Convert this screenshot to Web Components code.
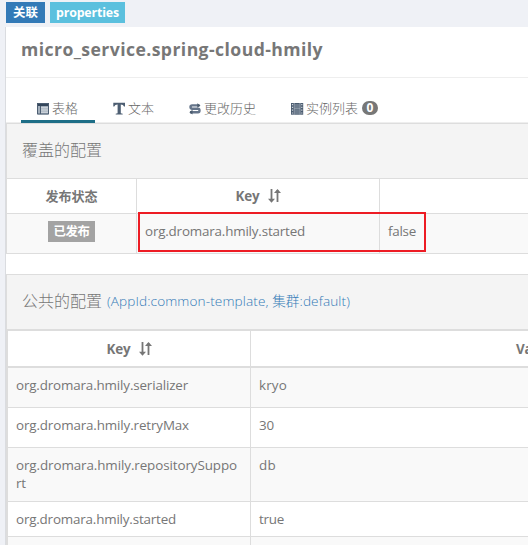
<!DOCTYPE html>
<html lang="zh">
<head>
<meta charset="utf-8">
<title>micro_service.spring-cloud-hmily</title>
<style>
html,body{margin:0;height:545px;overflow:hidden;background:#eff1f6}
body{font:13.4px/18px "Open Sans","Noto Sans","Noto Sans CJK SC",sans-serif;color:#767676}
</style>
</head>
<body>
<config-page></config-page>
<script>
const define = (name, html, after) => {
  const t = document.createElement('template');
  t.innerHTML = html;
  customElements.define(name, class extends HTMLElement {
    constructor() {
      super();
      this.attachShadow({mode: 'open'}).append(t.content.cloneNode(true));
    }
    connectedCallback() { if (after) after(this); }
  });
};

// One-line text whose tracking is adjusted to fill the width given in "w".
define('fit-text', `<style>:host{display:inline-block;white-space:nowrap}span{display:inline-block}</style><span><slot></slot></span>`, el => {
  const span = el.shadowRoot.querySelector('span');
  const w = +el.getAttribute('w');
  requestAnimationFrame(() => {
    const n = [...el.textContent].length;
    span.style.letterSpacing = (w - span.getBoundingClientRect().width) / n + 'px';
    el.style.width = w + 'px';
  });
});

define('tag-label', `<style>
:host{display:inline-flex;align-items:center;justify-content:center;box-sizing:border-box;height:21px;color:#fff;font-weight:700;font-size:12.4px;line-height:21px;background:var(--bg,#a3a3a3)}
</style><slot></slot>`);

define('sort-icon', `<style>:host{display:inline-block;width:13px;height:14px;margin-left:8px}svg{display:block}</style>
<svg width="13" height="14" viewBox="0 0 13 14" fill="none" stroke="#767676" stroke-width="1.8"><path d="M3.5 0V12M9.5 13V1"/><path d="M0 9.7H7L3.5 13.7ZM6 4H13L9.5 0Z" fill="#767676" stroke="none"/></svg>`);

define('tab-icon', `<style>:host{display:block;width:13px;height:13px}svg{display:none}
:host([kind=table]) .table,:host([kind=text]) .text,:host([kind=history]) .history,:host([kind=list]) .list{display:block}</style>
<svg class="table" width="13" height="13" viewBox="0 0 13 13"><path fill="#a3afbb" d="M0 1H12V12.5H0Z"/><path fill="#34465b" d="M0 1H12V4H0Z"/><path fill="none" stroke="#4d5e72" d="M.5 1.5H11.5V12H.5ZM3.5 4V12"/><path stroke="#e4e8ec" stroke-width=".9" d="M4 5.8H11M4 8H11M4 10.2H11"/></svg>
<svg class="text" width="13" height="13" viewBox="0 0 13 13"><path fill="#4d5e72" d="M.3 .8H12V4.5H11Q10.5 2.5 7.8 2.5V11.2L9.7 11.7V12.6H2.7V11.7L4.6 11.2V2.5Q1.8 2.5 1.3 4.5H.3Z"/></svg>
<svg class="history" width="13" height="13" viewBox="0 0 13 13"><path fill="none" stroke="#65758a" stroke-width="2.4" d="M10.5 3.4H3.2Q1.5 3.4 1.5 5T3.2 6.7H9Q10.5 6.7 10.5 8.4T9 10.2H1"/><path fill="#4b5c6e" d="M8.3 1.3L11.5 3.4L8.3 5.7ZM3.5 7.7L.3 10.2L3.5 12.5Z"/></svg>
<svg class="list" width="13" height="13" viewBox="0 0 13 13"><path fill="#4a5b6f" d="M0 1H12.2V12.7H0Z"/><path fill="#6d7c8d" d="M3.8 2H8.6V6H3.8ZM3.8 7.5H8.6V12H3.8Z"/><path stroke="#a9b4bf" stroke-width=".8" d="M3.2 1V12.7M9 1V12.7M3.2 6.7H9"/><path fill="#d0d6dc" d="M.9 2H2.1V3.2H.9ZM.9 4.8H2.1V6H.9ZM.9 7.6H2.1V8.8H.9ZM.9 10.4H2.1V11.6H.9ZM10.2 2H11.4V3.2H10.2ZM10.2 4.8H11.4V6H10.2ZM10.2 7.6H11.4V8.8H10.2ZM10.2 10.4H11.4V11.6H10.2Z"/></svg>`);

define('nav-tab', `<style>
:host{display:flex;box-sizing:border-box;height:29px;gap:3px;padding-left:16px;border-bottom:3px solid transparent;font-size:13px;font-weight:300;line-height:20px;color:#666}
:host([active]){border-color:#1d6e87}
tab-icon{margin-top:8px}.t{display:flex;align-items:center;height:22px;margin:3px 0 0 -1px}
::slotted(b){box-sizing:border-box;display:block;background:#777;color:#fff;border-radius:8px;width:16px;height:14px;text-align:center;font:700 12px/14px "Open Sans",sans-serif;margin-left:4px}
</style><tab-icon></tab-icon><div class="t"><slot></slot></div>`, el => el.shadowRoot.querySelector('tab-icon').setAttribute('kind', el.getAttribute('kind')));

define('section-head', `<style>
:host{display:flex;align-items:center;box-sizing:border-box;height:var(--h,54px);padding:0 0 var(--pb,1px) 15px;background:#f4f4f4;font-size:16px;font-weight:300;color:#777}
::slotted(.note){color:#337ab7;font-size:13.6px;margin-left:5px}
</style><slot></slot>`);

define('table-row', `<style>
:host{display:grid;box-sizing:border-box;grid-template-columns:var(--cols);height:var(--h);border-bottom:var(--line,1px) solid #ddd;background:var(--row,#fff)}
::slotted(div){box-sizing:border-box;padding:8px 8px 0;border-right:1px solid #ddd}
::slotted(.h){font-weight:700;display:flex;justify-content:center;align-items:center;padding:0 8px}
::slotted(.c){text-align:center;padding-top:7px}
</style><slot></slot>`);

define('config-page', `<style>
:host{display:block;width:528px;height:545px;overflow:hidden;position:relative}
.tags{display:flex;gap:5px;padding:2px 0 4px 6px;height:21px}
.panel{margin-left:5px;border-left:1px solid #dadce0;background:#fff;width:1100px;height:518px}
h1{box-sizing:border-box;height:51px;margin:0;padding:10px 0 0 15px;font-size:17.6px;line-height:25px;font-weight:700;border-bottom:1px solid #eee;color:#777}
.tabs{display:flex;box-sizing:border-box;height:46px;padding:16px 0 0 15px;border-bottom:1px solid #ddd;background:linear-gradient(#eee,#eee) 0 44px/100% 1px no-repeat}
.one{--cols:130px 243px 650px;border-left:1px solid #ddd}
section-head{border-bottom:1px solid #ddd}
.one section-head{--h:55px;--pb:3px}
.two{--cols:243px 567px 200px;margin-top:20px;border-left:1px solid #ddd;border-top:1px solid #ddd}
.two section-head{--h:56px;--pb:2px;border-bottom-width:2px}
.body{border-left:1px solid #ddd}
.mark{position:absolute;left:138px;top:212px;width:288px;height:40px;box-sizing:border-box;border:2px solid #ed1c24}
</style>
<div class="tags"><tag-label style="width:39px;--bg:#337ab7"><fit-text w="25">关联</fit-text></tag-label><tag-label style="width:75px;--bg:#5bc0de"><fit-text w="63">properties</fit-text></tag-label></div>
<div class="panel">
<h1><fit-text w="302">micro_service.spring-cloud-hmily</fit-text></h1>
<div class="tabs">
<nav-tab active kind="table" style="width:74px"><fit-text w="26">表格</fit-text></nav-tab>
<nav-tab kind="text" style="width:78px;padding-left:18px"><fit-text w="26">文本</fit-text></nav-tab>
<nav-tab kind="history" style="width:101px;padding-left:16px"><fit-text w="52">更改历史</fit-text></nav-tab>
<nav-tab kind="list" style="width:120px;padding-left:17px"><fit-text w="52">实例列表</fit-text><b>0</b></nav-tab>
</div>
<div class="one">
<section-head><fit-text w="80">覆盖的配置</fit-text></section-head>
<table-row style="--h:35px"><div class="h"><fit-text w="52" style="font-size:13px">发布状态</fit-text></div><div class="h"><fit-text w="24">Key</fit-text><sort-icon></sort-icon></div><div></div></table-row>
<table-row style="--h:40px;--row:#f9f9f9"><div class="c"><tag-label style="width:47px"><fit-text w="36">已发布</fit-text></tag-label></div><div><fit-text w="160">org.dromara.hmily.started</fit-text></div><div><fit-text w="28">false</fit-text></div></table-row>
</div>
<div class="two">
<section-head><fit-text w="80">公共的配置</fit-text><fit-text class="note" w="243">(AppId:common-template, 集群:default)</fit-text></section-head>
<div class="body">
<table-row style="--h:37px;--line:2px"><div class="h"><fit-text w="24">Key</fit-text><sort-icon></sort-icon></div><div class="h"><fit-text w="36">Value</fit-text></div><div></div></table-row>
<table-row style="--h:40px;--row:#f9f9f9"><div><fit-text w="172">org.dromara.hmily.serializer</fit-text></div><div><fit-text w="28">kryo</fit-text></div></table-row>
<table-row style="--h:40px"><div><fit-text w="173">org.dromara.hmily.retryMax</fit-text></div><div><fit-text w="15">30</fit-text></div></table-row>
<table-row style="--h:54px;--row:#f9f9f9"><div><fit-text w="221">org.dromara.hmily.repositorySuppo</fit-text><br><fit-text w="10">rt</fit-text></div><div><fit-text w="17">db</fit-text></div></table-row>
<table-row style="--h:35px"><div><fit-text w="160">org.dromara.hmily.started</fit-text></div><div><fit-text w="25">true</fit-text></div></table-row>
<table-row style="--h:35px;--row:#f9f9f9"><div></div><div></div></table-row>
</div>
</div>
</div>
<div class="mark"></div>`);
</script>
</body>
</html>
